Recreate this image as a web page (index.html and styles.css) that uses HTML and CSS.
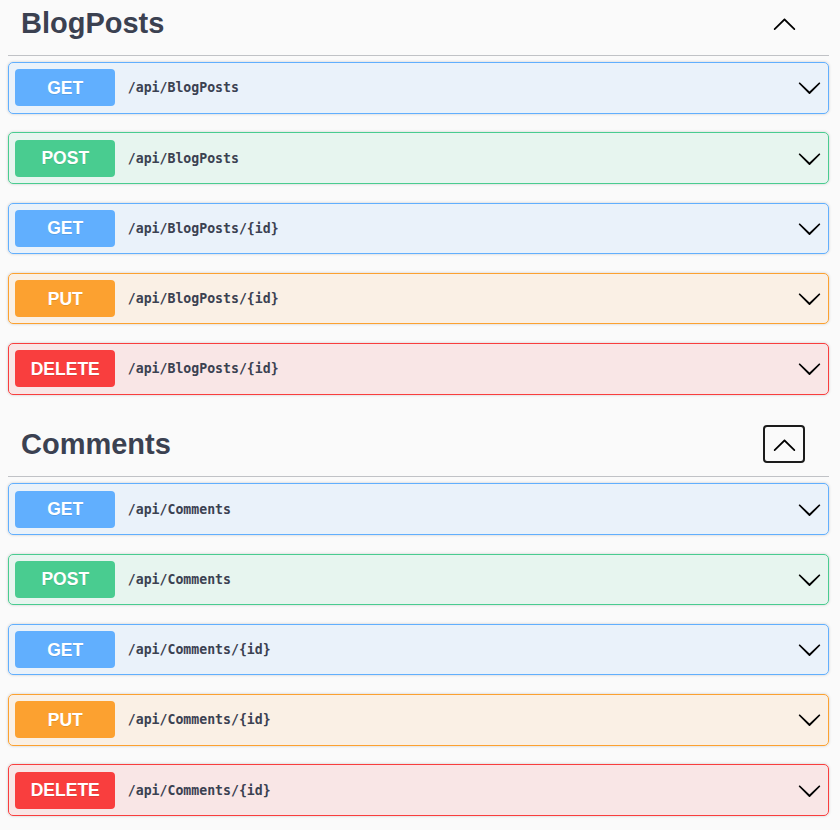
FILE: index.html
```html
<!DOCTYPE html>
<html lang="en">
<head>
<meta charset="utf-8">
<title>API</title>
<link rel="stylesheet" href="styles.css">
</head>
<body>
<div class="page">
  <section class="tag">
    <h3 class="tag-header">
      <span class="tag-name">BlogPosts</span>
      <button class="expand" aria-label="Collapse operation">
        <svg class="icon" viewBox="0 0 20 20" width="25" height="25"><path d="M17.418 14.908c.272.268.709.268.979 0s.271-.701 0-.969l-7.908-7.83c-.27-.268-.707-.268-.979 0l-7.908 7.83c-.27.268-.27.701 0 .969.271.268.709.268.979 0L10 7.767l7.418 7.141z"/></svg>
      </button>
    </h3>
    <div class="ops">
      <div class="op get"><span class="method">GET</span><span class="path">/api/BlogPosts</span><svg class="icon" viewBox="0 0 20 20" width="25" height="25"><path d="M17.418 6.109c.272-.268.709-.268.979 0s.271.701 0 .969l-7.908 7.83c-.27.268-.707.268-.979 0l-7.908-7.83c-.27-.268-.27-.701 0-.969.271-.268.709-.268.979 0L10 13.25l7.418-7.141z"/></svg></div>
      <div class="op post"><span class="method">POST</span><span class="path">/api/BlogPosts</span><svg class="icon" viewBox="0 0 20 20" width="25" height="25"><path d="M17.418 6.109c.272-.268.709-.268.979 0s.271.701 0 .969l-7.908 7.83c-.27.268-.707.268-.979 0l-7.908-7.83c-.27-.268-.27-.701 0-.969.271-.268.709-.268.979 0L10 13.25l7.418-7.141z"/></svg></div>
      <div class="op get"><span class="method">GET</span><span class="path">/api/BlogPosts/{id}</span><svg class="icon" viewBox="0 0 20 20" width="25" height="25"><path d="M17.418 6.109c.272-.268.709-.268.979 0s.271.701 0 .969l-7.908 7.83c-.27.268-.707.268-.979 0l-7.908-7.83c-.27-.268-.27-.701 0-.969.271-.268.709-.268.979 0L10 13.25l7.418-7.141z"/></svg></div>
      <div class="op put"><span class="method">PUT</span><span class="path">/api/BlogPosts/{id}</span><svg class="icon" viewBox="0 0 20 20" width="25" height="25"><path d="M17.418 6.109c.272-.268.709-.268.979 0s.271.701 0 .969l-7.908 7.83c-.27.268-.707.268-.979 0l-7.908-7.83c-.27-.268-.27-.701 0-.969.271-.268.709-.268.979 0L10 13.25l7.418-7.141z"/></svg></div>
      <div class="op delete"><span class="method">DELETE</span><span class="path">/api/BlogPosts/{id}</span><svg class="icon" viewBox="0 0 20 20" width="25" height="25"><path d="M17.418 6.109c.272-.268.709-.268.979 0s.271.701 0 .969l-7.908 7.83c-.27.268-.707.268-.979 0l-7.908-7.83c-.27-.268-.27-.701 0-.969.271-.268.709-.268.979 0L10 13.25l7.418-7.141z"/></svg></div>
    </div>
  </section>
  <section class="tag">
    <h3 class="tag-header">
      <span class="tag-name">Comments</span>
      <button class="expand focused" aria-label="Collapse operation">
        <svg class="icon" viewBox="0 0 20 20" width="25" height="25"><path d="M17.418 14.908c.272.268.709.268.979 0s.271-.701 0-.969l-7.908-7.83c-.27-.268-.707-.268-.979 0l-7.908 7.83c-.27.268-.27.701 0 .969.271.268.709.268.979 0L10 7.767l7.418 7.141z"/></svg>
      </button>
    </h3>
    <div class="ops">
      <div class="op get"><span class="method">GET</span><span class="path">/api/Comments</span><svg class="icon" viewBox="0 0 20 20" width="25" height="25"><path d="M17.418 6.109c.272-.268.709-.268.979 0s.271.701 0 .969l-7.908 7.83c-.27.268-.707.268-.979 0l-7.908-7.83c-.27-.268-.27-.701 0-.969.271-.268.709-.268.979 0L10 13.25l7.418-7.141z"/></svg></div>
      <div class="op post"><span class="method">POST</span><span class="path">/api/Comments</span><svg class="icon" viewBox="0 0 20 20" width="25" height="25"><path d="M17.418 6.109c.272-.268.709-.268.979 0s.271.701 0 .969l-7.908 7.83c-.27.268-.707.268-.979 0l-7.908-7.83c-.27-.268-.27-.701 0-.969.271-.268.709-.268.979 0L10 13.25l7.418-7.141z"/></svg></div>
      <div class="op get"><span class="method">GET</span><span class="path">/api/Comments/{id}</span><svg class="icon" viewBox="0 0 20 20" width="25" height="25"><path d="M17.418 6.109c.272-.268.709-.268.979 0s.271.701 0 .969l-7.908 7.83c-.27.268-.707.268-.979 0l-7.908-7.83c-.27-.268-.27-.701 0-.969.271-.268.709-.268.979 0L10 13.25l7.418-7.141z"/></svg></div>
      <div class="op put"><span class="method">PUT</span><span class="path">/api/Comments/{id}</span><svg class="icon" viewBox="0 0 20 20" width="25" height="25"><path d="M17.418 6.109c.272-.268.709-.268.979 0s.271.701 0 .969l-7.908 7.83c-.27.268-.707.268-.979 0l-7.908-7.83c-.27-.268-.27-.701 0-.969.271-.268.709-.268.979 0L10 13.25l7.418-7.141z"/></svg></div>
      <div class="op delete"><span class="method">DELETE</span><span class="path">/api/Comments/{id}</span><svg class="icon" viewBox="0 0 20 20" width="25" height="25"><path d="M17.418 6.109c.272-.268.709-.268.979 0s.271.701 0 .969l-7.908 7.83c-.27.268-.707.268-.979 0l-7.908-7.83c-.27-.268-.27-.701 0-.969.271-.268.709-.268.979 0L10 13.25l7.418-7.141z"/></svg></div>
    </div>
  </section>
</div>
</body>
</html>
```
FILE: styles.css
```css
html, body {
  margin: 0;
  padding: 0;
  background: #fafafa;
}

.page {
  margin: -8px 11px 0 8px;
}

.tag-header {
  display: flex;
  align-items: center;
  justify-content: space-between;
  margin: 0 0 6.5px;
  padding: 12px 24px 12.5px 13px;
  border-bottom: 1px solid rgba(59, 65, 81, 0.3);
  font-family: "Liberation Sans", Arial, sans-serif;
  font-size: 29px;
  font-weight: 700;
  color: #3b4151;
  line-height: 38px;
}

.expand {
  display: flex;
  align-items: center;
  justify-content: center;
  box-sizing: border-box;
  width: 42px;
  height: 38px;
  padding: 0;
  border: 2px solid transparent;
  border-radius: 4px;
  background: none;
  cursor: pointer;
}

.expand.focused {
  border-color: #1b1b1b;
}

.icon {
  display: block;
  flex: none;
  fill: #000;
}

.op {
  display: flex;
  align-items: center;
  margin: 0 0 18.75px;
  padding: 6.25px;
  border: 1px solid;
  border-radius: 5px;
  box-shadow: 0 0 3px rgba(0, 0, 0, 0.19);
}

.method {
  flex: none;
  width: 100px;
  padding: 7.5px 0;
  border-radius: 4px;
  text-align: center;
  font-family: "Liberation Sans", Arial, sans-serif;
  font-size: 17.5px;
  font-weight: 700;
  line-height: 22px;
  color: #fff;
  text-shadow: 0 1px 0 rgba(0, 0, 0, 0.1);
}

.path {
  flex: 1;
  padding: 0 12.5px;
  font-family: "DejaVu Sans Mono", monospace;
  font-size: 13.2px;
  font-weight: 700;
  color: #3b4151;
}

.get {
  border-color: #61affe;
  background: rgba(97, 175, 254, 0.1);
}
.get .method { background: #61affe; }

.post {
  border-color: #49cc90;
  background: rgba(73, 204, 144, 0.1);
}
.post .method { background: #49cc90; }

.put {
  border-color: #fca130;
  background: rgba(252, 161, 48, 0.1);
}
.put .method { background: #fca130; }

.delete {
  border-color: #f93e3e;
  background: rgba(249, 62, 62, 0.1);
}
.delete .method { background: #f93e3e; }
```
